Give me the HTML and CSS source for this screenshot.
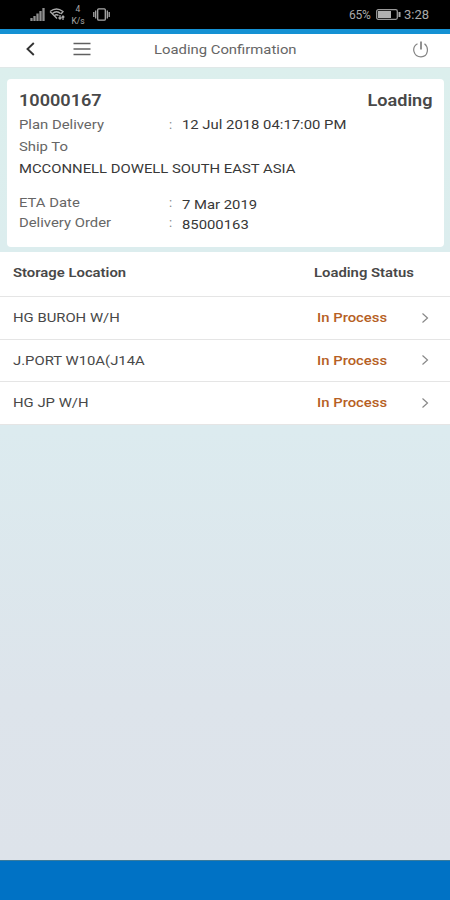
FILE: index.html
```html
<!DOCTYPE html>
<html lang="en">
<head>
<meta charset="utf-8">
<title>Loading Confirmation</title>
<link rel="stylesheet" href="styles.css">
</head>
<body>
<div class="screen">
  <div class="status">
    <svg class="signal" width="15" height="13" viewBox="0 0 15 13"><path d="M1.500 10v3M4.500 8v5M7.500 5.500v7.500M10.500 3v10M13.500 0v13" stroke="#909090" stroke-width="2.300"/></svg>
    <svg class="wifi" width="16" height="13" viewBox="0 0 16 13" fill="none" stroke="#aaa" stroke-width="1.300"><path d="M1 3.500Q7.500-1.500 14 3.500L12 6M1 3.500l7 7M3.500 5.500Q7.500 2 11.500 5.500M5.500 7.500q2-1.500 4 0M11 7v4M9.500 9.500L11 11l1.500-1.500M14 12V8M12.800 9.500L14 8l1.300 1.500"/></svg>
    <div class="rate"><span>4</span><span>K/s</span></div>
    <svg class="vibrate" width="17" height="13" viewBox="0 0 17 13" fill="none" stroke="#aaa" stroke-width="1.300"><rect x="4.700" y=".8" width="7.600" height="11.400" rx="1"/><path d="M2.700 2.500v8M14.300 2.500v8M.8 4v5M16.200 4v5"/></svg>
    <span class="pct">65%</span>
    <svg class="battery" width="25" height="11" viewBox="0 0 25 11"><rect x=".7" y=".7" width="20.600" height="9.600" rx="1.500" fill="none" stroke="#999" stroke-width="1.300"/><rect x="2" y="2" width="13" height="7" fill="#b0b0b0"/><path d="M23.500 3v5" stroke="#aaa" stroke-width="2"/></svg>
    <span class="clock">3:28</span>
  </div>
  <div class="nav">
    <svg class="back" width="10" height="14" viewBox="0 0 10 14"><path d="M8.800 1L2.500 7l6.300 6" fill="none" stroke="#333" stroke-width="1.900"/></svg>
    <svg class="menu" width="18" height="14" viewBox="0 0 18 14"><path d="M.5 1.500h17M.5 7h17M.5 12.500h17" stroke="#606060" stroke-width="1.500"/></svg>
    <h1><span class="wide">Loading Confirmation</span></h1>
    <svg class="power" width="18" height="17" viewBox="0 0 18 17" fill="none" stroke="#858585" stroke-width="1.200"><path d="M5.500 2.800C-1 6.500 1.500 15.800 9 15.800S17 6.500 12.500 2.800"/><path d="M9 .5v8" stroke-width="1.800"/></svg>
  </div>
  <div class="panel">
    <div class="card">
      <div class="head"><span class="wide">10000167</span><span class="wide right">Loading</span></div>
      <div class="row"><span class="label"><span class="wide">Plan Delivery</span></span><span class="colon">:</span><span class="value"><span class="wide">12 Jul 2018 04:17:00 PM</span></span></div>
      <div class="row"><span class="label"><span class="wide">Ship To</span></span></div>
      <div class="row"><span class="value"><span class="wide">MCCONNELL DOWELL SOUTH EAST ASIA</span></span></div>
      <div class="row tight gap"><span class="label"><span class="wide">ETA Date</span></span><span class="colon">:</span><span class="value drop"><span class="wide">7 Mar 2019</span></span></div>
      <div class="row tight"><span class="label"><span class="wide">Delivery Order</span></span><span class="colon">:</span><span class="value drop"><span class="wide">85000163</span></span></div>
    </div>
  </div>
  <div class="list">
    <div class="item header"><span class="place"><span class="wide">Storage Location</span></span><span class="state"><span class="wide">Loading Status</span></span></div>
    <div class="item"><span class="place"><span class="wide">HG BUROH W/H</span></span><span class="state"><span class="wide">In Process</span></span><svg class="chev" width="8" height="12" viewBox="0 0 8 12"><path d="M1.500 1.500L6.500 6l-5 4.500"/></svg></div>
    <div class="item"><span class="place"><span class="wide">J.PORT W10A(J14A</span></span><span class="state"><span class="wide">In Process</span></span><svg class="chev" width="8" height="12" viewBox="0 0 8 12"><path d="M1.500 1.500L6.500 6l-5 4.500"/></svg></div>
    <div class="item"><span class="place"><span class="wide">HG JP W/H</span></span><span class="state"><span class="wide">In Process</span></span><svg class="chev" width="8" height="12" viewBox="0 0 8 12"><path d="M1.500 1.500L6.500 6l-5 4.500"/></svg></div>
  </div>
  <div class="footer"></div>
</div>
</body>
</html>
```
FILE: styles.css
```css
* { box-sizing: border-box; }
body { margin: 0; font-family: Roboto, sans-serif; font-size: 13px; color: #484848; }
.screen { height: 900px; display: flex; flex-direction: column; overflow: hidden; background: linear-gradient(#dcefed 68px, #dcebef 430px, #dde4eb 700px, #dde3ea 860px); }
.status { height: 34px; background: #000; border-bottom: 5px solid #1591d3; display: flex; align-items: center; padding-left: 30px; color: #aaa; flex: none; }
.status svg { flex: none; }
.wifi { margin-left: 4px; }
.rate { width: 18px; margin-left: 4px; display: flex; flex-direction: column; align-items: center; font-size: 8.5px; line-height: 12px; padding-top: 1px; }
.vibrate { margin-left: 6px; }
.pct { margin-left: 239px; width: 24px; font-size: 12px; letter-spacing: -.2px; }
.battery { margin-left: 3px; }
.clock { margin-left: 3px; font-size: 13px; }
.nav { height: 34px; background: #fff; border-bottom: 1px solid #e0e8e8; display: flex; align-items: center; padding-left: 25px; flex: none; padding-bottom: 3px; }
.menu { margin-left: 38px; }
h1 { margin: 0 0 0 63px; width: 258px; font-size: 13px; font-weight: 400; color: #666; }
.wide { display: inline-block; transform: scaleX(1.142); transform-origin: left; white-space: nowrap; }
.right { transform-origin: right; }
.panel { height: 184px; padding: 11px 6px 5px 7px; flex: none; }
.card { height: 168px; background: #fff; border-radius: 4px; padding: 10px 12px 0; }
.head { display: flex; justify-content: space-between; font-size: 16px; line-height: 23px; height: 24px; font-weight: 600; }
.head .wide { transform: scaleX(1.13); }
.row { display: flex; height: 22px; line-height: 23px; }
.label { width: 150px; color: #666; flex: none; }
.colon { width: 13px; color: #888; }
.value { color: #383838; }
.label + .colon + .value { margin-left: 0; }
.tight { height: 20px; line-height: 22px; }
.gap { margin-top: 13px; }
.drop { padding-top: 2px; }
.list { height: 172px; background: #fff; flex: none; }
.item { display: flex; align-items: center; height: 42.5px; padding-left: 13px; border-bottom: 1px solid #e5e5e5; }
.header { height: 45px; font-weight: 600; padding-bottom: 4px; }
.place { width: 304px; }
.header .place { width: 301px; }
.state { width: 104px; }
.item:not(.header) .state { color: #b66024; font-weight: 500; }
.chev { fill: none; stroke: #888; stroke-width: 1.2; }
.footer { height: 40px; background: #0072c5; border-top: 1px solid #397b9d; margin-top: auto; flex: none; }
```
